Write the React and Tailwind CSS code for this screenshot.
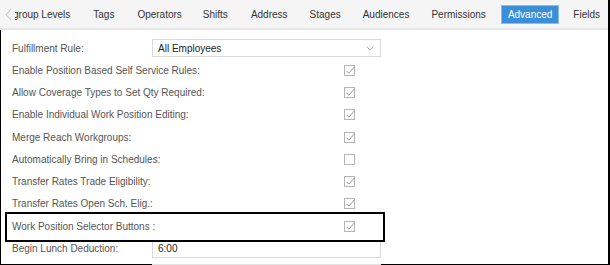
import React from "react";

const rows = [
  { label: "Enable Position Based Self Service Rules:", checked: true },
  { label: "Allow Coverage Types to Set Qty Required:", checked: true },
  { label: "Enable Individual Work Position Editing:", checked: true },
  { label: "Merge Reach Workgroups:", checked: true },
  { label: "Automatically Bring in Schedules:", checked: false },
  { label: "Transfer Rates Trade Eligibility:", checked: true },
  { label: "Transfer Rates Open Sch. Elig.:", checked: true },
  { label: "Work Position Selector Buttons :", checked: true },
];

function Check({ checked }) {
  return (
    <svg width="13" height="13" viewBox="0 0 13 13" className="block">
      <rect x="1.5" y="1.5" width="10" height="10" fill="white" stroke="#b5b5b5" strokeWidth="1" />
      {checked && (
        <path d="M3.5 6.8 L5.8 9.2 L11.6 2.6" fill="none" stroke="#9a9a9a" strokeWidth="1" />
      )}
    </svg>
  );
}

export default function App() {
  const tabs = [
    { t: "Tags", w: "w-[43px]" },
  ];
  return (
    <div
      className="w-[610px] h-[265px] overflow-hidden bg-white relative"
      style={{ fontFamily: '"Liberation Sans", Arial, sans-serif' }}
    >
      <div className="w-[610px] h-[265px] border-r-2 border-b border-black flex flex-col">
        {/* Tab bar */}
        <div className="h-[30px] shrink-0 bg-[#f5f5f5] border-b-2 border-[#e6e6e6] flex items-center text-[10px] text-[#333]">
          <div className="w-[15px] shrink-0 flex justify-center pl-[2px]">
            <svg width="7" height="13" viewBox="0 0 7 13">
              <path d="M6 1 L1.2 6.5 L6 12" fill="none" stroke="#c8c8c8" strokeWidth="1.1" />
            </svg>
          </div>
          <div className="flex-1 overflow-hidden h-full flex items-center">
            <div className="flex items-center whitespace-nowrap">
              <span className="ml-[-2px]">group Levels</span>
              <span className="ml-[23px]">Tags</span>
              <span className="ml-[23px]">Operators</span>
              <span className="ml-[21px]">Shifts</span>
              <span className="ml-[23px]">Address</span>
              <span className="ml-[22px]">Stages</span>
              <span className="ml-[22px]">Audiences</span>
              <span className="ml-[22px]">Permissions</span>
              <span className="ml-[15px] h-[19px] px-[6px] flex items-center bg-[#3a8fd8] border border-[#8cbce9] text-white">Advanced</span>
              <span className="ml-[14px]">Fields</span>
            </div>
          </div>
        </div>

        {/* Content */}
        <div className="flex-1 border-l border-black pt-[7px] text-[10px] text-[#555]">
          <div className="h-[22px] flex items-center">
            <div className="w-[151px] pl-[11px] shrink-0">Fulfillment Rule:</div>
            <div className="w-[229px] h-[18px] border border-[#d9d9d9] flex items-center justify-between pl-[5px] pr-[6px] text-[#222]">
              <span>All Employees</span>
              <svg width="8" height="5" viewBox="0 0 8 5">
                <path d="M0.5 0.5 L4 4 L7.5 0.5" fill="none" stroke="#b0b0b0" strokeWidth="0.9" />
              </svg>
            </div>
          </div>
          {rows.map((r) => (
            <div key={r.label} className="h-[22.3px] flex items-center">
              <div className="w-[342px] pl-[11px] shrink-0">{r.label}</div>
              <Check checked={r.checked} />
            </div>
          ))}
          <div className="h-[22.3px] flex items-center">
            <div className="w-[151px] pl-[11px] shrink-0">Begin Lunch Deduction:</div>
            <div className="w-[229px] h-[18px] border border-[#d9d9d9] flex items-center pl-[5px] text-[#222]">
              6:00
            </div>
          </div>
          <div className="ml-[151px] w-[229px] h-[10px] mt-[4px] border border-[#e3e3e3]"></div>
        </div>
      </div>

      {/* annotation highlight box */}
      <div className="absolute left-[5px] top-[212px] w-[380px] h-[30px] border-2 border-black pointer-events-none"></div>
    </div>
  );
}
